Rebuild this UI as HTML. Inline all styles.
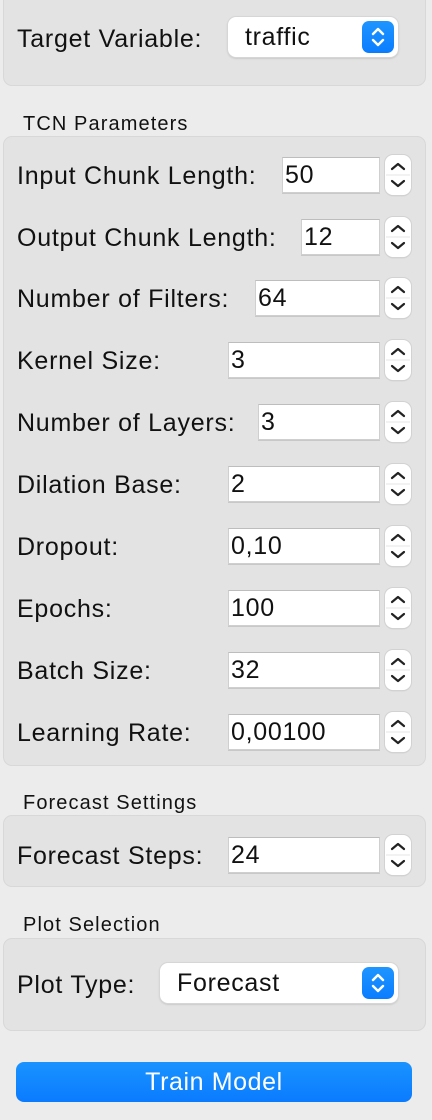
<!DOCTYPE html>
<html><head><style>
*{box-sizing:border-box;margin:0;padding:0}
body{width:432px;height:1120px;background:#ececec;font-family:"Liberation Sans",Helvetica,Arial,sans-serif;color:#111;position:relative;overflow:hidden}
.grp{position:absolute;left:3px;width:423px;background:#e3e3e3;border:1px solid #d8d8d8;border-radius:9px}
.sec{position:absolute;left:23px;font-size:20px;letter-spacing:1.1px}
.lbl{position:absolute;left:17px;font-size:25px;line-height:28px;letter-spacing:0.75px}
.fld{position:absolute;height:36px;background:#fff;border:1px solid #cfcfcf;border-top-color:#bdbdbd;font-size:25px;line-height:34px;padding-left:2px;letter-spacing:0.7px;box-shadow:0 1px 0 #c8c8c8}
.stp{position:absolute;left:385px;width:26px;height:40px;background:#fff;border-radius:8px;box-shadow:0 0 0 1px #d2d2d2,0 1px 1px #bbb}
.stp svg{position:absolute;left:0;top:0}
.pop{position:absolute;height:40px;background:#fff;border-radius:8px;box-shadow:0 0 0 1px #d6d6d6,0 1px 2px #aaa;font-size:25px;line-height:40px;letter-spacing:0.7px}
.pb{position:absolute;right:4px;top:4px;width:32px;height:32px;border-radius:7px;background:linear-gradient(#1f95ff,#0a7dff)}
</style></head><body>
<div class="grp" style="top:-10px;height:96px"></div>
<div class="lbl" style="top:25px">Target Variable:</div>
<div class="pop" style="left:228px;top:17px;width:170px"><span style="position:absolute;left:17px">traffic</span><div class="pb"><svg width="32" height="32"><path d="M11 13l5-5 5 5M11 19l5 5 5-5" stroke="#fff" stroke-width="2.4" fill="none" stroke-linecap="round" stroke-linejoin="round"/></svg></div></div>

<div class="sec" style="top:113px">TCN Parameters</div>
<div class="grp" style="top:136px;height:630px"></div>

<div class="sec" style="top:792px">Forecast Settings</div>
<div class="grp" style="top:815px;height:72px"></div>

<div class="sec" style="top:914px">Plot Selection</div>
<div class="grp" style="top:938px;height:93px"></div>
<div class="lbl" style="top:971px">Plot Type:</div>
<div class="pop" style="left:160px;top:963px;width:238px"><span style="position:absolute;left:17px">Forecast</span><div class="pb"><svg width="32" height="32"><path d="M11 13l5-5 5 5M11 19l5 5 5-5" stroke="#fff" stroke-width="2.4" fill="none" stroke-linecap="round" stroke-linejoin="round"/></svg></div></div>

<div style="position:absolute;left:16px;top:1062px;width:396px;height:40px;border-radius:8px;background:linear-gradient(#1a93ff,#0a7bff);color:#fff;font-size:25px;letter-spacing:0.6px;line-height:40px;text-align:center">Train Model</div>

<div id="rows"></div>
<script>
var rows=[["Input Chunk Length:","50",282,175],["Output Chunk Length:","12",301,237],["Number of Filters:","64",255,298],["Kernel Size:","3",228,360],["Number of Layers:","3",258,422],["Dilation Base:","2",228,484],["Dropout:","0,10",228,546],["Epochs:","100",228,608],["Batch Size:","32",228,670],["Learning Rate:","0,00100",228,732],["Forecast Steps:","24",228,855]];
var h="";
rows.forEach(function(r){var c=r[3];
h+='<div class="lbl" style="top:'+(c-13)+'px">'+r[0]+'</div>';
h+='<div class="fld" style="left:'+r[2]+'px;top:'+(c-18)+'px;width:'+(380-r[2])+'px">'+r[1]+'</div>';
h+='<div class="stp" style="top:'+(c-20)+'px"><svg width="26" height="40"><path d="M7 14l6-5 6 5M7 26l6 5 6-5" stroke="#222" stroke-width="2.2" fill="none" stroke-linecap="round" stroke-linejoin="round"/><line x1="1" y1="20" x2="25" y2="20" stroke="#e4e4e4"/></svg></div>';});
document.getElementById("rows").innerHTML=h;
</script>
</body></html>
